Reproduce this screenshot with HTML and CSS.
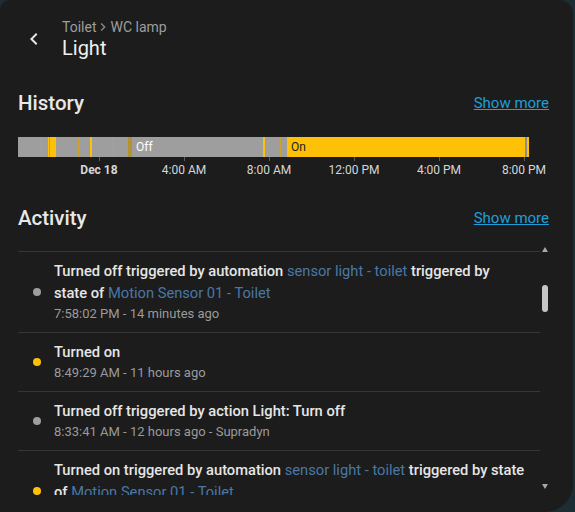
FILE: index.html
```html
<!DOCTYPE html>
<html lang="en">
<head>
<meta charset="utf-8">
<title>Light</title>
<link rel="stylesheet" href="styles.css">
</head>
<body>
<div class="dialog">
  <header class="top">
    <button class="back" aria-label="Back"><svg viewBox="0 0 24 24"><path d="M15.41,16.58L10.83,12L15.41,7.41L14,6L8,12L14,18L15.41,16.58Z"/></svg></button>
    <div class="titles">
      <div class="crumb"><span>Toilet</span><svg class="sep" viewBox="0 0 24 24"><path d="M8.59,16.58L13.17,12L8.59,7.41L10,6L16,12L10,18L8.59,16.58Z"/></svg><span>WC lamp</span></div>
      <div class="title">Light</div>
    </div>
  </header>

  <section class="section history">
    <div class="section-head"><h2>History</h2><a class="more" href="#">Show more</a></div>
    <div class="timeline">
      <div class="bar">
        <span class="seg off" style="width:23px"></span>
        <span class="seg thin" style="width:1px"></span>
        <span class="seg off" style="width:6px"></span>
        <span class="seg on" style="width:1px"></span>
        <span class="seg off" style="width:1px"></span>
        <span class="seg on" style="width:6px"></span>
        <span class="seg off" style="width:22px"></span>
        <span class="seg thin" style="width:1px"></span>
        <span class="seg off" style="width:11px"></span>
        <span class="seg on" style="width:2px"></span>
        <span class="seg off" style="width:21px"></span>
        <span class="seg thin" style="width:1px"></span>
        <span class="seg off" style="width:14px"></span>
        <span class="seg gold" style="width:4px"></span>
        <span class="seg off label" style="width:131px">Off</span>
        <span class="seg on" style="width:2px"></span>
        <span class="seg off" style="width:15px"></span>
        <span class="seg thin" style="width:1px"></span>
        <span class="seg off" style="width:6px"></span>
        <span class="seg on label" style="width:238px">On</span>
        <span class="seg dim" style="width:2px"></span>
        <span class="seg on" style="width:2px"></span>
      </div>
      <div class="axis">
        <span class="tick strong">Dec 18</span>
        <span class="tick">4:00 AM</span>
        <span class="tick">8:00 AM</span>
        <span class="tick">12:00 PM</span>
        <span class="tick">4:00 PM</span>
        <span class="tick">8:00 PM</span>
      </div>
    </div>
  </section>

  <section class="section activity">
    <div class="section-head"><h2>Activity</h2><a class="more" href="#">Show more</a></div>
    <div class="log">
      <div class="entries">
        <div class="entry">
          <span class="dot grey"></span>
          <div class="body">
            <div class="msg">Turned off triggered by automation <a class="link" href="#">sensor light - toilet</a> triggered by state of <a class="link" href="#">Motion Sensor 01 - Toilet</a></div>
            <div class="time">7:58:02 PM - 14 minutes ago</div>
          </div>
        </div>
        <div class="entry">
          <span class="dot yellow"></span>
          <div class="body">
            <div class="msg">Turned on</div>
            <div class="time">8:49:29 AM - 11 hours ago</div>
          </div>
        </div>
        <div class="entry">
          <span class="dot grey"></span>
          <div class="body">
            <div class="msg">Turned off triggered by action Light: Turn off</div>
            <div class="time">8:33:41 AM - 12 hours ago - Supradyn</div>
          </div>
        </div>
        <div class="entry">
          <span class="dot yellow"></span>
          <div class="body">
            <div class="msg">Turned on triggered by automation <a class="link" href="#">sensor light - toilet</a> triggered by state of <a class="link" href="#">Motion Sensor 01 - Toilet</a></div>
            <div class="time">8:12:40 AM - 12 hours ago</div>
          </div>
        </div>
      </div>
      <div class="scrollbar">
        <span class="arrow up"></span>
        <span class="thumb"></span>
        <span class="arrow down"></span>
      </div>
    </div>
  </section>
</div>
</body>
</html>
```

FILE: styles.css
```css
html, body {
  margin: 0;
  height: 100%;
}

body {
  background: #1d2d34;
  font-family: Roboto, "Noto Sans", sans-serif;
  overflow: hidden;
}

.dialog {
  width: 573px;
  height: 512px;
  box-sizing: border-box;
  padding: 0 24px 0 18px;
  background: #1c1c1c;
  border-radius: 10px 14px 28px 0;
  display: flex;
  flex-direction: column;
}

/* header */
.top {
  display: flex;
  align-items: flex-start;
  margin-left: -8px;
  padding-top: 15px;
}

.back {
  width: 48px;
  height: 48px;
  padding: 0;
  border: 0;
  background: none;
  display: flex;
  align-items: center;
  justify-content: center;
  flex: none;
}

.back svg {
  width: 24px;
  height: 24px;
  fill: #e6e6e6;
}

.titles {
  margin-left: 4px;
  margin-top: 2px;
}

.crumb {
  display: flex;
  align-items: center;
  font-size: 14px;
  line-height: 20px;
  color: #9e9e9e;
}

.sep {
  width: 16px;
  height: 16px;
  fill: #8a8a8a;
  margin: 0 -1px;
}

.title {
  font-size: 20px;
  line-height: 22px;
  color: #f0f0f0;
}

/* sections */
.history {
  margin-top: 28px;
}

.activity {
  margin-top: 29px;
}

.section-head {
  display: flex;
  align-items: center;
  justify-content: space-between;
  height: 24px;
}

.section-head h2 {
  margin: 0;
  font-size: 20.5px;
  font-weight: 500;
  line-height: 24px;
  color: #e8e8e8;
}

.more {
  font-size: 15px;
  color: #1e9fd9;
  text-decoration: underline;
}

/* timeline */
.timeline {
  margin-top: 22px;
}

.bar {
  display: flex;
  height: 20px;
}

.seg {
  flex: none;
  height: 20px;
  box-sizing: border-box;
  overflow: hidden;
  white-space: nowrap;
  font-size: 12px;
  line-height: 20px;
}

.seg.label {
  padding-left: 4px;
}

.seg.off { background: #9e9e9e; color: #ffffff; }
.seg.on { background: #ffc107; color: #1c1c1c; }
.seg.thin { background: #cfa22c; }
.seg.gold { background: #b39232; }
.seg.dim { background: #8e8e8e; }

.axis {
  display: flex;
  padding-left: 38.5px;
}

.tick {
  flex: none;
  width: 85px;
  display: flex;
  flex-direction: column;
  align-items: center;
  font-size: 12px;
  line-height: 14px;
  color: #d6d6d6;
  white-space: nowrap;
}

.tick::before {
  content: "";
  width: 1px;
  height: 4px;
  margin-bottom: 2px;
  background: #5a5a5a;
}

.tick.strong {
  font-weight: 700;
}

/* activity log */
.log {
  margin-top: 14px;
  height: 251px;
  display: flex;
}

.entries {
  width: 522px;
  flex: none;
  padding-top: 7px;
  box-sizing: border-box;
  overflow: hidden;
}

.entry {
  display: flex;
  align-items: center;
  border-top: 1px solid #363636;
  padding: 8px 15px 8px 15px;
}

.dot {
  flex: none;
  width: 8px;
  height: 8px;
  border-radius: 50%;
  margin-right: 13px;
}

.dot.grey { background: #9e9e9e; }
.dot.yellow { background: #ffc107; }

.body {
  flex: 1;
  min-width: 0;
}

.msg {
  font-size: 14.7px;
  font-weight: 500;
  line-height: 22px;
  color: #e6e6e6;
}

.msg .link {
  font-weight: 400;
  color: #4a78a6;
  text-decoration: none;
}

.time {
  font-size: 13px;
  line-height: 20px;
  color: #9a9a9a;
}

.scrollbar {
  width: 10px;
  flex: none;
  display: flex;
  flex-direction: column;
  align-items: center;
  box-sizing: border-box;
  padding: 3px 0 6px;
}

.arrow {
  width: 0;
  height: 0;
  border-left: 3px solid transparent;
  border-right: 3px solid transparent;
}

.arrow.up {
  border-bottom: 5px solid #a8a8a8;
}

.arrow.down {
  margin-top: auto;
  border-top: 5px solid #a8a8a8;
}

.thumb {
  width: 6px;
  height: 27px;
  margin-top: 33px;
  border-radius: 3px;
  background: #c6c6c6;
}
```
